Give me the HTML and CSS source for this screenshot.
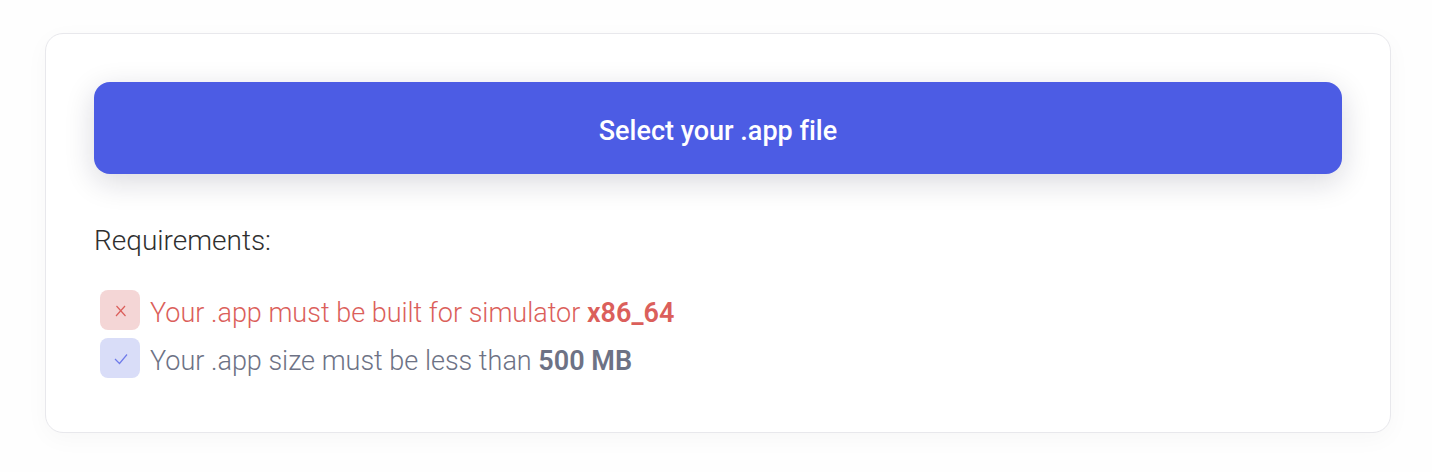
FILE: index.html
```html
<!doctype html>
<html lang="en">
  <head>
    <meta charset="utf-8">
    <meta name="viewport" content="width=device-width, initial-scale=1">
    <title>Upload your app</title>
    <link rel="stylesheet" href="styles.css">
  </head>
  <body>
    <main class="card">
      <button type="button" class="select-button">Select your .app file</button>

      <p class="title">Requirements:</p>
      <ul class="requirements">
        <li class="requirement invalid">
          <span class="badge">
            <svg width="40" height="40" viewBox="0 0 40 40" aria-hidden="true">
              <path d="M16.5 16 L25.5 26 M25 16 L16 26"/>
            </svg>
          </span>
          <span class="text">Your .app must be built for simulator <b>x86_64</b></span>
        </li>
        <li class="requirement valid">
          <span class="badge">
            <svg width="40" height="40" viewBox="0 0 40 40" aria-hidden="true">
              <path d="M15 21 L19.5 25.5 L27 16.5"/>
            </svg>
          </span>
          <span class="text">Your .app size must be less than <b>500 MB</b></span>
        </li>
      </ul>
    </main>
  </body>
</html>
```
FILE: styles.css
```css
* {
  box-sizing: border-box;
}

body {
  margin: 0;
  padding: 33px 41px 39px 45px;
  background: #fefefe;
  color: #2f2f2f;
  font-family: Roboto, "Liberation Sans", sans-serif;
  font-size: 27px;
  font-weight: 350;
  font-variant-ligatures: none;
  line-height: 44px;
}

.card {
  padding: 48px 48px 50px;
  background: #fff;
  border: 1px solid #e8e8ec;
  border-radius: 18px;
  box-shadow: 0 6px 24px rgba(0, 0, 0, 0.03);
}

.select-button {
  display: block;
  width: 100%;
  padding: 27px 24px 21px;
  border: 0;
  border-radius: 16px;
  background: #4c5ce4;
  box-shadow: 0 8px 30px rgba(20, 20, 50, 0.16);
  color: #fff;
  font: inherit;
  font-weight: 500;
  font-variant-ligatures: none;
  cursor: pointer;
}

.title {
  margin: 45px 0 23px;
  font-size: 28px;
}

.requirements {
  margin: 0;
  padding: 0 6px;
  list-style: none;
}

.requirement {
  display: flex;
  height: 48px;
  gap: 10px;
}

.badge {
  width: 40px;
  height: 40px;
  margin: 4px 0;
  border-radius: 8px;
}

.badge svg {
  display: block;
  fill: none;
  stroke: currentColor;
  stroke-width: 1.2;
}

.text {
  padding-top: 5px;
}

.text b {
  font-weight: 600;
}

.invalid {
  color: #db5f5b;
}

.invalid .badge {
  background: #f4d6d6;
}

.valid {
  color: #6d7285;
}

.valid .badge {
  background: #d9ddf8;
  color: #6f7bea;
}
```
